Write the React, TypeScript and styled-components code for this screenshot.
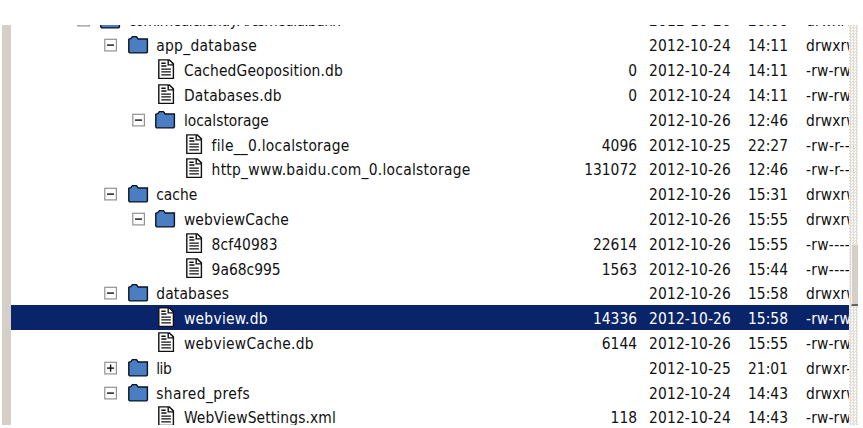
import React, { useLayoutEffect, useRef, useState } from "react";
import styled, { createGlobalStyle } from "styled-components";

const Global = createGlobalStyle`
  html, body { margin: 0; background: #fff; overflow: hidden; }
  * { box-sizing: border-box; }
`;

const Page = styled.main`
  width: 863px;
  height: 428px;
  padding: 25px 4px 3px 2px;
  overflow: hidden;
  background: #fff;
`;
const Panel = styled.div`
  display: flex;
  height: 400px;
  overflow: hidden;
`;
const Frame = styled.div`
  flex: 0 0 9px;
  background: #d4cfc7;
`;
const Tree = styled.div`
  flex: 0 0 838px;
  overflow: hidden;
`;
const Rows = styled.div`
  margin-top: -17.9px;
  & > :first-child { margin-bottom: 0.5px; }
`;
const Row = styled.div<{ $selected?: boolean }>`
  display: grid;
  grid-template-columns: 560px 66px 99px 59px 1fr;
  height: 24.8px;
  align-items: center;
  white-space: nowrap;
  font: 15.4px/24px "DejaVu Sans Condensed", "DejaVu Sans", sans-serif;
  font-stretch: condensed;
  color: ${(p) => (p.$selected ? "#fff" : "#111")};
  background: ${(p) => (p.$selected ? "#0a246a" : "transparent")};
`;
const NameCell = styled.div<{ $depth: number }>`
  display: flex;
  align-items: center;
  height: 24px;
  padding-left: ${(p) => 65.5 + p.$depth * 27.7}px;
`;
const Toggle = styled.div`
  flex: 0 0 23.5px;
  height: 24px;
  svg { display: block; }
`;
const Icon = styled.div<{ $file: boolean }>`
  flex: 0 0 28.5px;
  height: 24px;
  padding: 1px 0 0 ${(p) => (p.$file ? 3 : 0)}px;
  svg { display: block; }
`;
const SizeCell = styled.div`
  display: flex;
  justify-content: flex-end;
`;
const Cell = styled.div`
  padding-left: 12px;
`;
const PermCell = styled.div`
  padding-left: 11px;
`;
const Label = styled.span<{ $spacing: number }>`
  display: block;
  width: max-content;
  padding-top: 2px;
  letter-spacing: ${(p) => p.$spacing}px;
`;
const Scrollbar = styled.div`
  flex: 0 0 9px;
  display: flex;
  flex-direction: column;
  background: repeating-conic-gradient(#dedbd5 0 25%, #fbfaf8 0 50%) 0 0 / 3px 3px;
`;
const Thumb = styled.div`
  height: 62px;
  margin: 219px 0 0 2px;
  background: #d4cfc7;
  border-top: 1px solid #eeebe5;
  border-left: 1px solid #f7f5f2;
  border-bottom: 2px solid #68645f;
`;

/** Text whose letter spacing is adjusted until it spans the given width. */
function Fit({ text, width }: { text: string; width: number }) {
  const ref = useRef<HTMLSpanElement>(null);
  const [spacing, setSpacing] = useState(0);
  useLayoutEffect(() => {
    if (ref.current) {
      setSpacing((width - ref.current.getBoundingClientRect().width) / text.length);
    }
  }, [text, width]);
  return <Label ref={ref} $spacing={spacing}>{text}</Label>;
}

const Box = ({ open }: { open: boolean }) => (
  <svg width="14" height="24" viewBox="0 0 14 24">
    <rect x="0.8" y="6.3" width="11.6" height="11.6" fill="#fff" stroke="#929292" strokeWidth="1.2" />
    <path d="M3 12.1h7" stroke="#111" strokeWidth="1.4" />
    {!open && <path d="M6.6 8.5v7.2" stroke="#111" strokeWidth="1.4" />}
  </svg>
);
const Folder = () => (
  <svg width="22" height="24" viewBox="0 0 22 24">
    <path d="M.8 18V5.2l2-.6 1.6-2h4l1.8 2.4h9.2V18l-.8.9H1.6z" fill="#4a7dc2" stroke="#0a1420" strokeWidth="1.4" />
  </svg>
);
const Doc = () => (
  <svg width="18" height="24" viewBox="0 0 18 24">
    <path d="M.8.9h10.6l4 4v14.5H.8z" fill="#fff" stroke="#111" strokeWidth="1.4" />
    <path d="M10.2.9v5h5.2" fill="none" stroke="#111" strokeWidth="1.4" />
    <path d="M3.3 4.2h4.4M3.3 7h5.2M3.3 10.1h9.6M3.3 12.9h9.6M3.3 15.9h9.6" stroke="#111" strokeWidth="1.4" />
  </svg>
);

type Kind = "open" | "closed" | "file";
type Entry = [number, Kind, string, number, string, string, string, string];
const entries: Entry[] = [
  [0, "open", "com.mediclient.yArcsmedia.bdnn", 212, "", "2012-10-26", "20:00", "drwxrwx"],
  [1, "open", "app_database", 101, "", "2012-10-24", "14:11", "drwxrwx"],
  [2, "file", "CachedGeoposition.db", 159, "0", "2012-10-24", "14:11", "-rw-rw-"],
  [2, "file", "Databases.db", 98, "0", "2012-10-24", "14:11", "-rw-rw-"],
  [2, "open", "localstorage", 85, "", "2012-10-26", "12:46", "drwxrwx"],
  [3, "file", "file__0.localstorage", 138, "4096", "2012-10-25", "22:27", "-rw-r--"],
  [3, "file", "http_www.baidu.com_0.localstorage", 259, "131072", "2012-10-26", "12:46", "-rw-r--"],
  [1, "open", "cache", 41, "", "2012-10-26", "15:31", "drwxrwx"],
  [2, "open", "webviewCache", 105, "", "2012-10-26", "15:55", "drwxrwx"],
  [3, "file", "8cf40983", 66, "22614", "2012-10-26", "15:55", "-rw----"],
  [3, "file", "9a68c995", 69, "1563", "2012-10-26", "15:44", "-rw----"],
  [1, "open", "databases", 73, "", "2012-10-26", "15:58", "drwxrwx"],
  [2, "file", "webview.db", 84, "14336", "2012-10-26", "15:58", "-rw-rw-"],
  [2, "file", "webviewCache.db", 130, "6144", "2012-10-26", "15:55", "-rw-rw-"],
  [1, "closed", "lib", 15, "", "2012-10-25", "21:01", "drwxr-x"],
  [1, "open", "shared_prefs", 94, "", "2012-10-24", "14:43", "drwxrwx"],
  [2, "file", "WebViewSettings.xml", 152, "118", "2012-10-24", "14:43", "-rw-rw-"],
];

const permWidths: Record<string, number> = {
  "drwxrwx": 60,
  "drwxr-x": 54,
  "-rw-rw-": 50,
  "-rw-r--": 44,
  "-rw----": 44,
};

export default function App() {
  return (
    <Page>
      <Global />
      <Panel>
        <Frame />
        <Tree>
          <Rows>
            {entries.map(([depth, kind, name, width, size, date, time, perm]) => (
              <Row key={name} $selected={name === "webview.db"}>
                <NameCell $depth={depth}>
                  <Toggle>{kind !== "file" && <Box open={kind === "open"} />}</Toggle>
                  <Icon $file={kind === "file"}>{kind === "file" ? <Doc /> : <Folder />}</Icon>
                  <Fit text={name} width={width} />
                </NameCell>
                <SizeCell>{size && <Fit text={size} width={size.length * 8.8} />}</SizeCell>
                <Cell><Fit text={date} width={82} /></Cell>
                <Cell><Fit text={time} width={40} /></Cell>
                <PermCell><Fit text={perm} width={permWidths[perm]} /></PermCell>
              </Row>
            ))}
          </Rows>
        </Tree>
        <Scrollbar><Thumb /></Scrollbar>
      </Panel>
    </Page>
  );
}
